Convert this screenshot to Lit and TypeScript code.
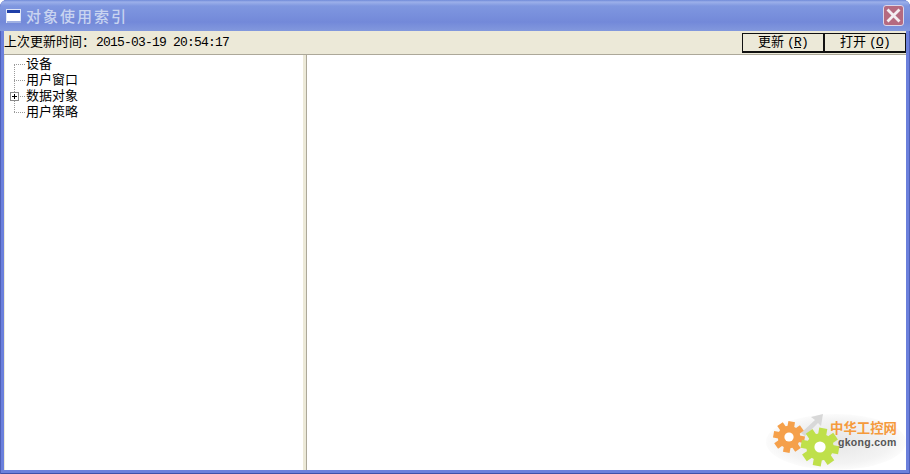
import { LitElement, html, css, svg } from "lit";
import { customElement } from "lit/decorators.js";

const gear = (cx: number, cy: number, r: number, color: string, hole: string) => {
  const teeth = [];
  for (let i = 0; i < 8; i++) {
    teeth.push(svg`<rect x="${cx - r * 0.24}" y="${cy - r * 1.12}" width="${r * 0.48}" height="${r * 0.5}" fill="${color}" transform="rotate(${i * 45 + 10} ${cx} ${cy})"/>`);
  }
  return svg`${teeth}<circle cx="${cx}" cy="${cy}" r="${r * 0.8}" fill="${color}"/><circle cx="${cx}" cy="${cy}" r="${r * 0.33}" fill="${hole}"/>`;
};

@customElement("app-root")
export class AppRoot extends LitElement {
  static styles = css`
    :host {
      display: block;
      width: 910px;
      height: 474px;
      overflow: hidden;
      font-family: "Liberation Mono", "Noto Sans CJK SC", monospace;
      font-size: 13px;
      color: #000;
    }
    .window {
      position: relative;
      box-sizing: border-box;
      width: 910px;
      height: 474px;
      display: flex;
      flex-direction: column;
      background: #6b80dc;
      box-shadow: inset 1px 0 0 #4f60b8, inset -1px 0 0 #4f60b8, inset 0 -1px 0 #3f50a8;
      border-radius: 7px 7px 0 0;
      padding: 0 4px 4px;
      overflow: hidden;
    }
    .titlebar {
      height: 31px;
      flex: none;
      margin: 0 -4px;
      padding: 0 6px 0 6px;
      display: flex;
      align-items: center;
      gap: 5px;
      background: linear-gradient(#6f8ad8 0, #9cb0ea 2px, #7f97e0 6px, #7389d9 22px, #8298dd 31px);
    }
    .appicon { width: 15px; height: 14px; flex: none; }
    .title {
      flex: 1;
      font-family: "Noto Sans CJK SC", sans-serif;
      font-size: 15px;
      font-weight: 500;
      letter-spacing: 2px;
      color: #c9d4f0;
      line-height: 30px;
      white-space: nowrap;
    }
    .close {
      width: 21px;
      height: 21px;
      flex: none;
      display: block;
    }
    .toolbar {
      flex: none;
      height: 24px;
      box-sizing: border-box;
      display: flex;
      align-items: flex-start;
      justify-content: space-between;
      padding: 2px 0 0 0;
      background: #ece9d8;
      border-bottom: 1px solid #aca899;
    }
    .stamp {
      line-height: 19px;
      white-space: nowrap;
    }
    .digits { letter-spacing: -0.8px; margin-left: 1px; }
    .buttons { display: flex; }
    .btn {
      box-sizing: border-box;
      width: 82px;
      height: 20px;
      border: 1px solid #111;
      border-bottom-width: 2px;
      text-align: center;
      line-height: 17px;
      background: #ece9d8;
      white-space: nowrap;
    }
    .btn + .btn { border-left-width: 2px; margin-left: -1px; width: 83px; }
    .btn u { text-underline-offset: 1px; }
    .btn .l { letter-spacing: -0.8px; margin-left: 3px; }
    .main {
      flex: 1;
      display: flex;
      min-height: 0;
    }
    .tree {
      width: 299px;
      box-sizing: border-box;
      flex: none;
      background: #fff;
      border-left: 1px solid #ece9d8;
      padding: 1px 0 0 0;
    }
    .split {
      flex: none;
      width: 4px;
      box-sizing: border-box;
      background: #ece9d8;
      border-right: 1px solid #aca899;
    }
    .content { flex: 1; background: #fff; }
    .node {
      position: relative;
      height: 16px;
      line-height: 18px;
      padding-left: 21px;
      white-space: nowrap;
    }
    .hline {
      position: absolute;
      left: 9px;
      top: 8px;
      width: 11px;
      border-top: 1px dotted #9a9a9a;
    }
    .vline {
      position: absolute;
      left: 9px;
      top: 8px;
      height: 16px;
      border-left: 1px dotted #9a9a9a;
    }
    .plus {
      position: absolute;
      left: 5px;
      top: 4px;
      width: 9px;
      height: 9px;
      display: block;
    }
    .logo {
      position: absolute;
      right: 4px;
      bottom: 4px;
      width: 146px;
      height: 62px;
      display: block;
    }
  `;

  render() {
    return html`
      <div class="window">
        <div class="titlebar">
          <svg class="appicon" viewBox="0 0 15 14">
            <rect x="0.5" y="0.5" width="14" height="13" fill="#fff" stroke="#dfe6f7"/>
            <rect x="1" y="1" width="13" height="3" fill="#1f3fa8"/>
            <rect x="1" y="12" width="14" height="2" fill="#9fb0e2"/>
          </svg>
          <div class="title">对象使用索引</div>
          <svg class="close" viewBox="0 0 21 21">
            <rect x="0.5" y="0.5" width="20" height="20" rx="2.5" fill="#b56a80" stroke="#dcd6e8"/>
            <path d="M5.5 5.5 L15.5 15.5 M15.5 5.5 L5.5 15.5" stroke="#f4eef2" stroke-width="2.8" stroke-linecap="square"/>
          </svg>
        </div>
        <div class="toolbar">
          <div class="stamp">上次更新时间：<span class="digits">2015-03-19 20:54:17</span></div>
          <div class="buttons">
            <div class="btn">更新<span class="l">(<u>R</u>)</span></div>
            <div class="btn">打开<span class="l">(<u>O</u>)</span></div>
          </div>
        </div>
        <div class="main">
          <div class="tree">
            <div class="node"><i class="hline"></i><i class="vline"></i>设备</div>
            <div class="node"><i class="hline"></i><i class="vline"></i>用户窗口</div>
            <div class="node">
              <i class="hline"></i><i class="vline"></i>
              <svg class="plus" viewBox="0 0 9 9">
                <rect x="0.5" y="0.5" width="8" height="8" fill="#fff" stroke="#8a8a8a"/>
                <path d="M2 4.5H7M4.5 2V7" stroke="#000"/>
              </svg>
              数据对象
            </div>
            <div class="node"><i class="hline"></i>用户策略</div>
          </div>
          <div class="split"></div>
          <div class="content"></div>
        </div>
        <svg class="logo" viewBox="0 0 146 62">
          <defs>
            <radialGradient id="halo" cx="0.5" cy="0.5" r="0.55">
              <stop offset="0" stop-color="#e6e6e6"/>
              <stop offset="0.7" stop-color="#f3f3f3"/>
              <stop offset="1" stop-color="#fff"/>
            </radialGradient>
          </defs>
          <ellipse cx="76" cy="34" rx="70" ry="28" fill="url(#halo)"/>
          <path d="M41 25 L55 12 L51 9 L63 6 L61 18 L58 15 L45 28 Z" fill="#d8d8d8"/>
          ${gear(29, 29, 14, "#f5a04a", "#fff")}
          ${gear(60, 39, 17, "#bfe04a", "#fff")}
          <text x="70" y="25" font-family="Noto Sans CJK SC, sans-serif" font-size="13.4" font-weight="700" fill="#f59a3c">中华工控网</text>
          <text x="78" y="38" font-family="Liberation Sans, sans-serif" font-size="10.5" font-weight="700" letter-spacing="0.3" fill="#555">gkong.com</text>
        </svg>
      </div>
    `;
  }
}
